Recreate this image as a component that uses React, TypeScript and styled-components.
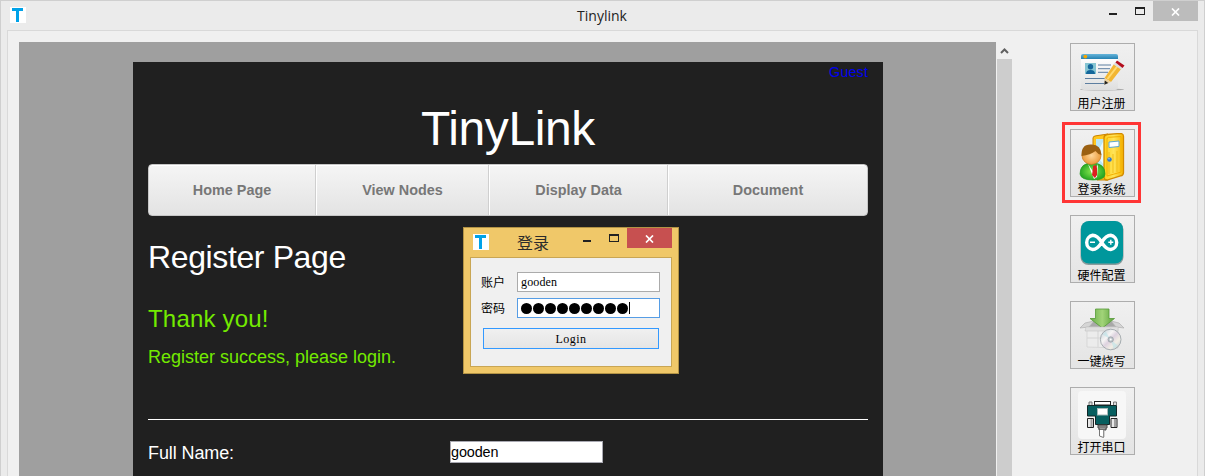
import React from "react";
import styled, { createGlobalStyle } from "styled-components";

const GlobalStyle = createGlobalStyle`
  * { box-sizing: border-box; }
  body {
    margin: 0;
    overflow: hidden;
    font-family: "Liberation Sans", "Noto Sans CJK SC", sans-serif;
  }
`;

const AppWindow = styled.div`
  width: 1205px;
  height: 476px;
  overflow: hidden;
  position: relative;
  display: flex;
  flex-direction: column;
  background: #ebebeb;
  border: 1px solid #cfcfcf;
  border-bottom: 0;
  padding: 0 6px;
`;

const TitleBar = styled.header`
  height: 29px;
  flex: none;
  display: grid;
  grid-template-columns: 1fr auto 1fr;
  align-items: start;
`;

const TitleText = styled.h1`
  margin: 0;
  padding-right: 1px;
  font: 400 14px/30px "Open Sans", sans-serif;
  color: #222;
`;

const Logo = styled.svg`
  display: block;
  width: 16px;
  height: 16px;
  margin: 6px 0 0 3px;
`;

const Controls = styled.div`
  display: flex;
  justify-content: flex-end;
  align-items: flex-start;
`;

const ControlGlyph = styled.svg`
  display: block;
  width: 37px;
  height: 20px;
  margin-right: 7px;
`;

const CloseButton = styled.button<{ $tone: string }>`
  width: 45px;
  height: 20px;
  padding: 1px 0 0;
  border: 0;
  display: grid;
  place-items: center;
  background: ${(p) => p.$tone};
`;

const Client = styled.main`
  flex: 1;
  min-height: 0;
  display: flex;
  background: #f0f0f0;
  border: 1px solid #d9d9d9;
  border-bottom: 0;
  padding: 11px 0 0 11px;
`;

const Viewport = styled.section`
  width: 977px;
  flex: none;
  overflow: hidden;
  background: #9f9f9f;
  padding: 20px 0 0 114px;
`;

const Page = styled.article`
  width: 750px;
  height: 460px;
  padding: 0 15px;
  background: #202020;
  color: #fff;
`;

const GuestRow = styled.div`
  height: 32px;
  display: flex;
  justify-content: flex-end;
  font-size: 14.4px;
  letter-spacing: 0.1px;
  line-height: 21px;
  color: #0000ee;
`;

const Brand = styled.h2`
  margin: 0;
  height: 70px;
  font-size: 48px;
  font-weight: 400;
  letter-spacing: -0.4px;
  line-height: 69px;
  text-align: center;
`;

const Nav = styled.nav`
  height: 52px;
  display: grid;
  grid-template-columns: 167px 173px 179px 1fr;
  border: 1px solid #c6c6c6;
  border-radius: 4px;
  background: linear-gradient(#f5f5f5, #e3e3e3);
  box-shadow: inset 0 1px 0 #fff;
`;

const NavItem = styled.a`
  display: flex;
  align-items: center;
  justify-content: center;
  font-size: 14.4px;
  font-weight: 700;
  color: #777;
  border-left: 1px solid #fff;
  border-right: 1px solid #cfcfcf;
  &:first-child { border-left: 0; }
  &:last-child { border-right: 0; }
`;

const PageHeading = styled.h3`
  margin: 0;
  height: 84px;
  font-size: 32px;
  font-weight: 400;
  letter-spacing: -0.38px;
  line-height: 82px;
`;

const Notice = styled.p<{ $size: number; $height: number; $line: number; $spacing?: number }>`
  margin: 0;
  height: ${(p) => p.$height}px;
  font-size: ${(p) => p.$size}px;
  line-height: ${(p) => p.$line}px;
  letter-spacing: ${(p) => p.$spacing ?? 0}px;
  color: #73ea00;
`;

const Divider = styled.hr`
  height: 1px;
  margin: 41px 0 21px;
  border: 0;
  background: #fff;
`;

const FormRow = styled.label`
  display: grid;
  grid-template-columns: 302px 153px;
  font-size: 18px;
  letter-spacing: -0.1px;
  line-height: 24px;
`;

const PageField = styled.input`
  height: 22px;
  padding: 0;
  border: 1px solid #a9a9b2;
  background: #fff;
  color: #000;
  font: 14.4px "Liberation Sans", sans-serif;
  letter-spacing: -0.1px;
`;

const ScrollBar = styled.div`
  width: 15px;
  margin-left: 1px;
  flex: none;
  display: flex;
  flex-direction: column;
`;

const ScrollArrow = styled.svg`
  display: block;
  width: 15px;
  height: 17px;
`;

const ScrollThumb = styled.div`
  flex: 1;
  background: #cdcdcd;
`;

const Tools = styled.aside`
  display: flex;
  flex-direction: column;
  gap: 18px;
  margin: 1px 0 0 58px;
`;

const ToolButton = styled.button`
  position: relative;
  width: 65px;
  height: 68px;
  flex: none;
  padding: 3px 1px 0 0;
  display: flex;
  flex-direction: column;
  align-items: center;
  border: 1px solid #adadad;
  background: linear-gradient(#f0f0f0, #e4e4e4);
  color: #000;
  font: 12px/16px "Noto Sans CJK SC", sans-serif;
  svg { display: block; width: 48px; height: 48px; flex: none; }
  span { white-space: nowrap; margin-right: 1px; }
`;

const Highlight = styled.i`
  position: absolute;
  inset: -8px -7px -7px -9px;
  border: 3px solid #ff3535;
`;

const Dialog = styled.section`
  position: absolute;
  left: 462px;
  top: 226px;
  width: 216px;
  height: 147px;
  padding: 0 6px 6px;
  border: 1px solid #b39345;
  background: #f0c869;
`;

const DialogBar = styled.header`
  height: 29px;
  display: grid;
  grid-template-columns: 47px 1fr auto;
  align-items: start;
`;

const DialogTitle = styled.h4`
  margin: 0;
  font: 400 16px/28px "Noto Sans CJK SC", sans-serif;
  color: #2b2b2b;
`;

const DialogBody = styled.form`
  height: 110px;
  display: flex;
  flex-direction: column;
  gap: 6px;
  padding: 14px 11px 0 10px;
  border: 1px solid #c9a654;
  background: #f0f0f0;
`;

const FieldRow = styled.label`
  display: grid;
  grid-template-columns: 36px 1fr;
  font: 12px/20px "Noto Sans CJK SC", sans-serif;
  color: #000;
`;

const Field = styled.div<{ $focused?: boolean }>`
  height: 20px;
  padding-left: 3px;
  display: flex;
  align-items: center;
  gap: 1px;
  border: 1px solid ${(p) => (p.$focused ? "#569de5" : "#ababab")};
  background: #fff;
  font: 12px/18px "Liberation Serif", serif;
  letter-spacing: 0.15px;
`;

const Dot = styled.i`
  width: 11px;
  height: 11px;
  border-radius: 50%;
  background: #000;
`;

const Caret = styled.i`
  width: 1px;
  height: 12px;
  background: #000;
`;

const LoginButton = styled.button`
  height: 21px;
  margin: 4px 1px 0 2px;
  padding: 1px 0 0;
  border: 1px solid #3399ff;
  background: linear-gradient(#f0f0f0, #e5e5e5);
  color: #000;
  font: 12px/18px "Liberation Serif", serif;
  letter-spacing: 0.5px;
`;

const TinyLogo = () => (
  <Logo viewBox="0 0 16 16" shapeRendering="crispEdges">
    <rect width="16" height="16" fill="#fff" />
    <path d="M2 1h11v3H9v11H6V4H2z" fill="#00a2e8" />
  </Logo>
);

const WindowControls = ({ tone }: { tone: string }) => (
  <Controls>
    <ControlGlyph viewBox="0 0 37 20" shapeRendering="crispEdges">
      <path d="M0 12h8v2H0z" fill="#222" />
      <path d="M26 6h10v8H26zM27 8v5h8V8z" fill="#222" fillRule="evenodd" />
    </ControlGlyph>
    <CloseButton $tone={tone} aria-label="Close">
      <svg width="9" height="8" viewBox="0 0 9 8">
        <path d="M1 .5 8 7.5M8 .5 1 7.5" stroke="#fff" strokeWidth="1.7" />
      </svg>
    </CloseButton>
  </Controls>
);

const RegisterIcon = () => (
  <svg viewBox="0 0 48 48">
    <defs>
      <linearGradient id="card" x2="0" y2="1"><stop stopColor="#fff" /><stop offset="1" stopColor="#dedede" /></linearGradient>
      <linearGradient id="cardHead" x2="0" y2="1"><stop stopColor="#66b5da" /><stop offset="1" stopColor="#2581b2" /></linearGradient>
    </defs>
    <ellipse cx="24" cy="42.5" rx="22" ry="1" fill="#aaa" />
    <path d="M3 10h37v30q0 3-3 3H6q-3 0-3-3z" fill="url(#card)" />
    <path d="M3 12V9q0-2 2-2h33q2 0 2 2v3z" fill="url(#cardHead)" />
    <circle cx="7.3" cy="9.6" r="1.9" fill="#f6a500" />
    <rect x="7" y="16" width="11" height="11" fill="#86c5d2" />
    <circle cx="12.5" cy="19.8" r="2.7" fill="#14679b" />
    <path d="M8 27q0-4 4.500-4t4.500 4z" fill="#14679b" />
    <path d="M20 18h13M20 21.700h12M20 25.300h10M7 31.500h20M7 36.500h19" stroke="#5d7ea0" />
    <path d="M26.500 31 36 17l7.500 4.500L33 35z" fill="#f2b632" />
    <path d="m29.500 32 10-13" stroke="#ffda70" strokeWidth="2" />
    <path d="M26.500 31 33 35l-6.500 2.500z" fill="#ecd09a" />
    <path d="m26.800 33.500 3.500 2.500-4 1.800z" fill="#222" />
    <path d="m35.500 17.500 2-2.500 7 5-1.500 2.500z" fill="#ddd" />
    <path d="m37.500 15.500 1.500-2 7.500 5-2 2.500z" fill="#b30d1c" />
  </svg>
);

const LoginIcon = () => (
  <svg viewBox="0 0 48 48">
    <defs>
      <linearGradient id="door"><stop stopColor="#ffcf19" /><stop offset=".5" stopColor="#ffe45a" /><stop offset="1" stopColor="#f7b500" /></linearGradient>
      <radialGradient id="coat"><stop stopColor="#8bea52" /><stop offset="1" stopColor="#2aa824" /></radialGradient>
      <radialGradient id="skin"><stop stopColor="#ffd79a" /><stop offset="1" stopColor="#ec9b3b" /></radialGradient>
    </defs>
    <path d="M15 20V5q0-2 3-2.200L30 1v46H19z" fill="#ffc61c" stroke="#c98200" />
    <path d="M18 6h8v35h-8z" fill="#b9e6f6" />
    <path d="M18 22 26 7v25z" fill="#e7fafe" />
    <path d="M26 5q0-3 3-3.500L42 .4q3.500 0 3.500 3v36q0 3-3 3.500L29 47q-3 0-3-3z" fill="url(#door)" stroke="#d38b00" strokeWidth="1.300" />
    <path d="M29 6q0-1.500 1.500-1.700L43 3.500v35.600L29 43z" fill="none" stroke="#f4b000" />
    <path d="M31 19v22M35 21v19M39 18v21" stroke="#f3bd14" />
    <path d="m31 9 10-1v5.500l-10 1z" fill="#fff" stroke="#5ba6cf" />
    <circle cx="31.500" cy="26.500" r="2.300" fill="#3378cc" />
    <circle cx="31" cy="25.800" r=".8" fill="#9fd0ff" />
    <path d="M2 41q0-11 12-11 13 0 13 11 0 6-12 6T2 41z" fill="url(#coat)" stroke="#249b20" strokeWidth=".7" />
    <path d="m10 31 6 9 4-9-1 13-3 2z" fill="#fff" />
    <path d="m15 33 3-1 1 3v7l-2 3-3-3 1-7z" fill="#dc2020" />
    <ellipse cx="13.500" cy="22.500" rx="9.500" ry="9" fill="url(#skin)" stroke="#c87719" strokeWidth=".7" />
    <path d="M3.500 23Q3 11 13 11.500 23 11 23.500 22q-4-1-6-4-5 4-14 5z" fill="#9b6011" />
  </svg>
);

const ArduinoIcon = () => (
  <svg viewBox="0 0 48 48">
    <rect x="2.500" y="2.500" width="43" height="43.500" rx="8" fill="#8b9b9c" />
    <rect x="3" y="2" width="42" height="42.500" rx="8" fill="#00979c" />
    <path d="M23.700 23.300c-3-4.800-5.400-7-9-7a7.200 7.200 0 0 0 0 14.200c3.600 0 6-2.300 9-7.200s5.400-7 9-7a7.200 7.200 0 0 1 0 14.200c-3.600 0-6-2.300-9-7.200z" fill="none" stroke="#fff" strokeWidth="3.400" />
    <path d="M12 23.300h5M30.300 23.300h5M32.800 20.800v5" stroke="#fff" strokeWidth="1.400" />
  </svg>
);

const BurnIcon = () => (
  <svg viewBox="0 0 48 48">
    <defs>
      <linearGradient id="arrow"><stop stopColor="#67ac48" /><stop offset=".5" stopColor="#a2d479" /><stop offset="1" stopColor="#5ba13b" /></linearGradient>
      <linearGradient id="disc" x2="1" y2="1"><stop stopColor="#b9cbd4" /><stop offset=".35" stopColor="#f6f4f4" /><stop offset=".5" stopColor="#ddd2df" /><stop offset=".7" stopColor="#f2eee5" /><stop offset="1" stopColor="#b7c4cc" /></linearGradient>
    </defs>
    <path d="m9 22 6-5h20l5 5z" fill="#a8a8a8" />
    <path d="M9 22h31v21l-31-1z" fill="#ececec" stroke="#d0d0d0" strokeWidth=".7" />
    <path d="M9 33h31M20 22v20" stroke="#d4d4d4" />
    <path d="m2 23 5-5 9-2-5 6zM46 23l-5-5-8-2 5 6z" fill="#d5d5d5" stroke="#b0b0b0" strokeWidth=".7" />
    <path d="M17.500 4H31v9.500h5.500L24.300 23 12 13.500h5.500z" fill="url(#arrow)" stroke="#559a37" strokeWidth=".8" />
    <path d="M8 22h32v4H7z" fill="#dfdfdf" stroke="#bdbdbd" strokeWidth=".5" />
    <circle cx="32.700" cy="34.500" r="10.300" fill="url(#disc)" stroke="#949da2" strokeWidth=".8" />
    <path d="m32.700 34.500-8-5 3-3zM32.700 34.500l7 6-4 3z" fill="#bce2e7" opacity=".6" />
    <circle cx="32.700" cy="34.500" r="2.700" fill="#bdc4c9" stroke="#899299" strokeWidth=".6" />
    <circle cx="32.700" cy="34.500" r="1" fill="#fff" />
  </svg>
);

const SerialIcon = () => (
  <svg viewBox="0 0 48 48">
    <rect width="48" height="48" rx="4" fill="#f7f7f7" />
    <path d="M11 14v-3h3v3M35.500 14v-3h3v3" fill="#ddd" stroke="#777" />
    <rect x="16.500" y="10.500" width="16" height="3.500" fill="#fff" stroke="#222" />
    <path d="M9.500 14.500h29V25h-7v8.500h-14V25h-8z" fill="#075f60" stroke="#122727" />
    <rect x="19.500" y="17.500" width="10" height="6.500" fill="#fff" stroke="#a6b9b8" />
    <path d="M9.500 27.500h6v9h-6zM33 27.500h6v9h-6z" fill="#e8e8e8" stroke="#222" />
    <path d="M13.500 28v8M37 28v8" stroke="#a0a0a0" strokeWidth="2" />
    <path d="M20 34h9v3h-1v2h-7v-2h-1z" fill="#999" stroke="#444" />
    <path d="M20 36h9" stroke="#666" />
    <path d="M21.500 39v6l4 1.500V39" fill="#fff" stroke="#777" />
    <path d="M26 39v7" stroke="#aaa" />
  </svg>
);

const tools = [
  { label: "用户注册", Icon: RegisterIcon },
  { label: "登录系统", Icon: LoginIcon, highlighted: true },
  { label: "硬件配置", Icon: ArduinoIcon },
  { label: "一键烧写", Icon: BurnIcon },
  { label: "打开串口", Icon: SerialIcon },
];

export default function App() {
  return (
    <AppWindow>
      <GlobalStyle />
      <TitleBar>
        <TinyLogo />
        <TitleText>Tinylink</TitleText>
        <WindowControls tone="#bcbcbc" />
      </TitleBar>
      <Client>
        <Viewport>
          <Page>
            <GuestRow>Guest</GuestRow>
            <Brand>TinyLink</Brand>
            <Nav>
              {["Home Page", "View Nodes", "Display Data", "Document"].map((item) => (
                <NavItem key={item}>{item}</NavItem>
              ))}
            </Nav>
            <PageHeading>Register Page</PageHeading>
            <Notice $size={24} $height={38} $line={38} $spacing={0.2}>Thank you!</Notice>
            <Notice $size={18} $height={40} $line={38}>Register success, please login.</Notice>
            <Divider />
            <FormRow>
              Full Name:
              <PageField defaultValue="gooden" />
            </FormRow>
          </Page>
        </Viewport>
        <ScrollBar>
          <ScrollArrow viewBox="0 0 15 17">
            <path d="m4 11 3.500-3.500L11 11" fill="none" stroke="#606060" strokeWidth="2" />
          </ScrollArrow>
          <ScrollThumb />
        </ScrollBar>
        <Tools>
          {tools.map(({ label, Icon, highlighted }) => (
            <ToolButton key={label}>
              <Icon />
              <span>{label}</span>
              {highlighted && <Highlight />}
            </ToolButton>
          ))}
        </Tools>
      </Client>
      <Dialog>
        <DialogBar>
          <TinyLogo />
          <DialogTitle>登录</DialogTitle>
          <WindowControls tone="#c75050" />
        </DialogBar>
        <DialogBody>
          <FieldRow>
            账户
            <Field>gooden</Field>
          </FieldRow>
          <FieldRow>
            密码
            <Field $focused>
              {Array.from({ length: 9 }, (_, i) => <Dot key={i} />)}
              <Caret />
            </Field>
          </FieldRow>
          <LoginButton type="button">Login</LoginButton>
        </DialogBody>
      </Dialog>
    </AppWindow>
  );
}
